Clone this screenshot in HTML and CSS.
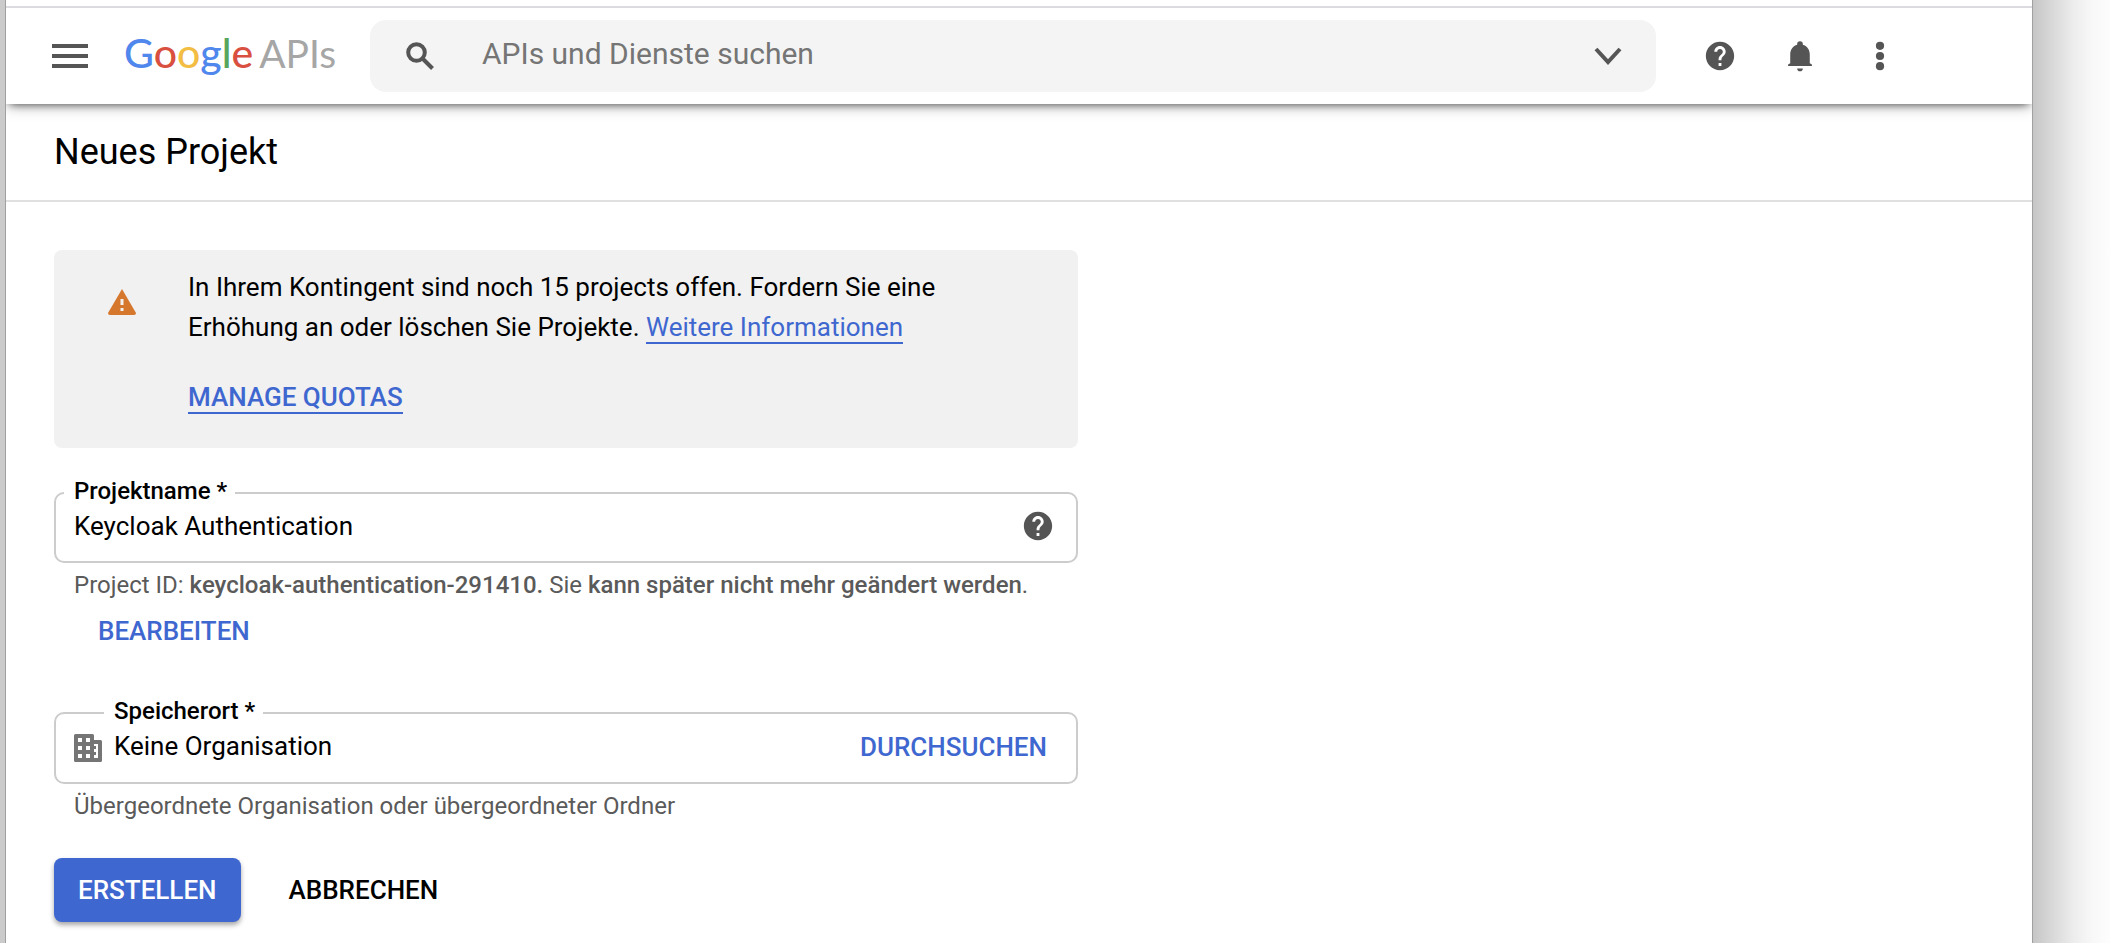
FILE: index.html
```html
<!DOCTYPE html>
<html lang="de">
<head>
<meta charset="utf-8">
<title>Neues Projekt</title>
<link rel="stylesheet" href="styles.css">
</head>
<body>
<div class="window">
  <header class="topbar">
    <button class="icon-button menu-button" type="button" aria-label="Menü">
      <svg class="menu-icon" viewBox="0 0 36 24"><path d="M0 0h36v4H0zM0 10h36v4H0zM0 20h36v4H0z"/></svg>
    </button>
    <a class="logo" href="#"><span class="google"><span class="blue">G</span><span class="red">o</span><span class="yellow">o</span><span class="blue">g</span><span class="green">l</span><span class="red">e</span></span><span class="apis">APIs</span></a>
    <form class="search" role="search">
      <svg class="search-icon" viewBox="0 0 28 28"><circle cx="10.500" cy="10.500" r="8.300" fill="none" stroke="currentColor" stroke-width="4"/><path d="M16 16l10.500 10.500" stroke="currentColor" stroke-width="4"/></svg>
      <input class="search-input" type="search" placeholder="APIs und Dienste suchen" aria-label="APIs und Dienste suchen">
      <button class="icon-button" type="button" aria-label="Suche öffnen">
        <svg class="chevron-icon" viewBox="0 0 28 18"><path d="M2 2l12 13L26 2" fill="none" stroke="currentColor" stroke-width="4"/></svg>
      </button>
    </form>
    <nav class="actions">
      <button class="icon-button" type="button" aria-label="Hilfe">
        <svg class="icon" viewBox="0 0 24 24"><path d="M12 2C6.480 2 2 6.480 2 12s4.480 10 10 10 10-4.480 10-10S17.520 2 12 2zm1 17h-2v-2h2v2zm2.070-7.750l-.9.920C13.450 12.900 13 13.500 13 15h-2v-.5c0-1.100.45-2.100 1.170-2.830l1.240-1.260c.37-.36.59-.86.59-1.410 0-1.100-.9-2-2-2s-2 .9-2 2H8c0-2.210 1.790-4 4-4s4 1.790 4 4c0 .88-.36 1.680-.93 2.250z"/></svg>
      </button>
      <button class="icon-button" type="button" aria-label="Benachrichtigungen">
        <svg class="icon" viewBox="0 0 24 24"><path d="M10 20.800h4a2 2 0 0 1-4 0zM18.900 17.200v-6.400c0-3.400-2-6-4.900-6.800v-.5a2 2 0 0 0-4 0V4c-2.900.8-4.900 3.400-4.900 6.800v6.400L3.600 18v1h16.800v-1z"/></svg>
      </button>
      <button class="icon-button" type="button" aria-label="Weitere Optionen">
        <svg class="icon" viewBox="0 0 24 24"><circle cx="12" cy="4.800" r="2.900"/><circle cx="12" cy="12" r="2.900"/><circle cx="12" cy="19.200" r="2.900"/></svg>
      </button>
    </nav>
  </header>
  <div class="page-title"><h1>Neues Projekt</h1></div>
  <main class="content">
    <section class="notice">
      <svg class="warning-icon" viewBox="0 0 28 26"><path d="M14 0L0 24q0 2 2 2h24q2 0 2-2z"/><path class="warning-mark" d="M12.500 10h3v6h-3zM12.500 19h3v3h-3z"/></svg>
      <div class="notice-body">
        <p>In Ihrem Kontingent sind noch 15 projects offen. Fordern Sie eine Erhöhung an oder löschen Sie Projekte. <a class="link" href="#">Weitere Informationen</a></p>
        <p><a class="link strong" href="#">MANAGE QUOTAS</a></p>
      </div>
    </section>
    <form class="project-form">
      <div class="field">
        <label class="field-label" for="name">Projektname *</label>
        <input class="field-input" id="name" type="text" value="Keycloak Authentication">
        <button class="icon-button" type="button" aria-label="Hilfe zum Projektnamen">
          <svg class="icon" viewBox="0 0 24 24"><path d="M12 2C6.480 2 2 6.480 2 12s4.480 10 10 10 10-4.480 10-10S17.520 2 12 2zm1 17h-2v-2h2v2zm2.070-7.750l-.9.920C13.450 12.900 13 13.500 13 15h-2v-.5c0-1.100.45-2.100 1.170-2.830l1.240-1.260c.37-.36.59-.86.59-1.410 0-1.100-.9-2-2-2s-2 .9-2 2H8c0-2.210 1.790-4 4-4s4 1.790 4 4c0 .88-.36 1.680-.93 2.250z"/></svg>
        </button>
      </div>
      <p class="hint">Project ID: <b>keycloak-authentication-291410.</b> Sie <b>kann später nicht mehr geändert werden</b>.</p>
      <button class="text-button edit" type="button">BEARBEITEN</button>
      <div class="field with-icon">
        <svg class="building-icon" viewBox="0 0 28 28"><path fill-rule="evenodd" d="M1.500 0h17q1.500 0 1.500 1.500V6h6.500q1.500 0 1.500 1.500v19q0 1.500-1.500 1.500h-25Q0 28 0 26.500v-25Q0 0 1.500 0zM4 4v4h4V4zM12 4v4h4V4zM4 12v4h4v-4zM12 12v4h4v-4zM4 20v4h4v-4zM12 20v4h4v-4zM20 10v2h2v3h-2v3h2v3h-2v3h4V10z"/></svg>
        <label class="field-label" for="location">Speicherort *</label>
        <input class="field-input" id="location" type="text" value="Keine Organisation" readonly>
        <button class="text-button browse" type="button">DURCHSUCHEN</button>
      </div>
      <p class="hint">Übergeordnete Organisation oder übergeordneter Ordner</p>
      <div class="buttons">
        <button class="button primary" type="submit">ERSTELLEN</button>
        <button class="button" type="button">ABBRECHEN</button>
      </div>
    </form>
  </main>
</div>
</body>
</html>
```

FILE: styles.css
```css
* { box-sizing: border-box; }

body {
  margin: 0;
  min-height: 100vh;
  display: flex;
  padding: 0 77px 0 5px;
  background: linear-gradient(to left, #fdfdfd, #f8f8f8 18px, #ededed 36px, #dcdcdc 54px, #c6c6c6 77px, #cbcbcb 78px);
  font-family: Roboto, "Liberation Sans", sans-serif;
  font-size: 26px;
  line-height: 30px;
  color: #000;
}

.window {
  flex: 1;
  min-width: 0;
  background: #fff;
  border: solid #a0a0a0;
  border-width: 0 1px;
  padding-top: 6px;
}

button, input { font: inherit; color: inherit; background: none; border: 0; padding: 0; margin: 0; outline: 0; }
button { cursor: pointer; }
h1, p { margin: 0; }
svg { display: block; fill: currentColor; }

.topbar {
  position: relative;
  display: flex;
  align-items: center;
  height: 98px;
  padding: 0 135px 0 46px;
  border-top: 2px solid #dcdce0;
  background: #fff;
  box-shadow: 0 2px 14px -1px rgba(0, 0, 0, .35), 0 4px 8px -4px rgba(0, 0, 0, .6);
  clip-path: inset(0 0 -30px 0);
  color: #555;
}

.icon-button { display: flex; justify-content: center; }
.icon { width: 34px; height: 34px; }
.menu-icon { width: 36px; height: 24px; }

.logo {
  display: flex;
  align-items: baseline;
  gap: 6px;
  width: 246px;
  margin-left: 36px;
  padding-bottom: 6px;
  font-family: Lato, sans-serif;
  line-height: 60px;
  text-decoration: none;
  white-space: nowrap;
}
.google { font-size: 41px; font-weight: 500; }
.apis { font-size: 39px; color: #a6a6a6; }
.blue { color: #5087ec; }
.red { color: #d95040; }
.yellow { color: #f2bd42; }
.green { color: #58a55c; }

.search {
  flex: 1;
  display: flex;
  align-items: center;
  height: 72px;
  padding: 0 34px 0 36px;
  border-radius: 16px;
  background: #f4f4f4;
}
.search-icon { width: 28px; height: 28px; }
.search-input { flex: 1; min-width: 0; margin-left: 48px; padding-bottom: 4px; font-size: 30px; line-height: 36px; }
.search-input::placeholder { color: #757575; opacity: 1; }
.chevron-icon { width: 28px; height: 18px; }

.actions { display: flex; gap: 46px; margin-left: 47px; }

.page-title { padding: 26px 48px; border-bottom: 2px solid #e0e0e0; }
.page-title h1 { font-size: 36px; font-weight: 400; line-height: 44px; }

.content { max-width: 1120px; padding: 48px; }

.notice {
  display: flex;
  gap: 52px;
  padding: 17px 54px 31px;
  border-radius: 8px;
  background: #f1f1f1;
}
.warning-icon { flex: none; width: 28px; height: 26px; margin-top: 22px; color: #d5782e; }
.warning-mark { fill: #f1f1f1; }
.notice-body { display: grid; gap: 30px; max-width: 780px; line-height: 40px; }
.link { color: #3f67d0; text-decoration: none; border-bottom: 2px solid; }
.strong { font-weight: 500; }

.project-form { margin-top: 44px; }

.field {
  position: relative;
  display: flex;
  padding: 17px 21px 20px 18px;
  border: 2px solid #ccc;
  border-radius: 10px;
}
.field-label {
  position: absolute;
  top: -17px;
  left: 8px;
  padding: 0 8px 0 10px;
  background: #fff;
  font-size: 24px;
  font-weight: 500;
  line-height: 28px;
}
.with-icon .field-label { left: 48px; }
.field-input { flex: 1; min-width: 0; height: 30px; }
.field .icon-button { height: 30px; align-items: center; color: #555; }
.building-icon { width: 28px; height: 28px; margin: 3px 12px 0 0; flex: none; align-self: flex-start; color: #757575; }

.hint { margin-top: 8px; padding-left: 20px; font-size: 24px; line-height: 28px; color: #5a5a5a; }
.hint b { font-weight: 500; }

.text-button { font-weight: 500; color: #3f67d0; }
.edit { display: block; margin: 17px 0 66px 44px; }
.browse { padding-right: 8px; }

.buttons { display: flex; gap: 24px; margin-top: 38px; }
.button { height: 64px; padding: 0 24px; border-radius: 8px; font-weight: 500; }
.primary { background: #3f67d0; color: #fff; box-shadow: 0 3px 5px rgba(0, 0, 0, .35); }
```
